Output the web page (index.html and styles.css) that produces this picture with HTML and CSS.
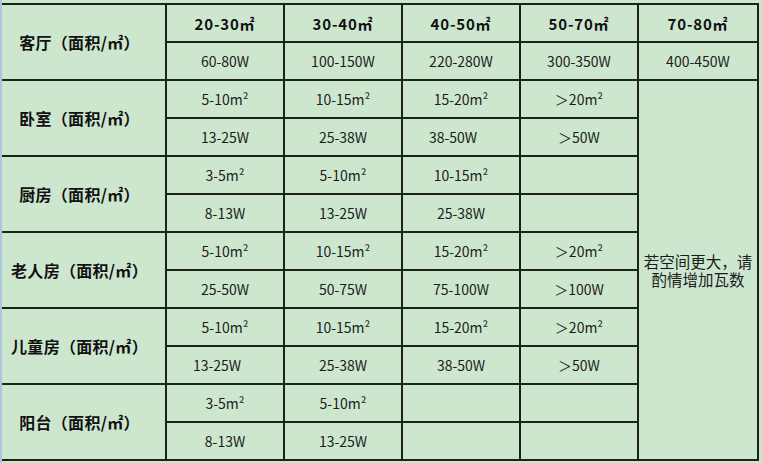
FILE: index.html
```html
<!DOCTYPE html>
<html lang="zh-CN">
<head>
<meta charset="utf-8">
<title>房间面积与瓦数</title>
<link rel="stylesheet" href="styles.css">
</head>
<body>
<div class="page">
  <div class="grid">
    <div class="c lab r1">客厅（面积/㎡）</div>
    <div class="c hd">20-30㎡</div>
    <div class="c hd">30-40㎡</div>
    <div class="c hd">40-50㎡</div>
    <div class="c hd">50-70㎡</div>
    <div class="c hd">70-80㎡</div>
    <div class="c">60-80W</div>
    <div class="c">100-150W</div>
    <div class="c">220-280W</div>
    <div class="c">300-350W</div>
    <div class="c">400-450W</div>

    <div class="c lab r2">卧室（面积/㎡）</div>
    <div class="c">5-10m²</div>
    <div class="c">10-15m²</div>
    <div class="c">15-20m²</div>
    <div class="c">＞20m²</div>
    <div class="c note"><span class="line">若空间更大，请</span><span class="line">酌情增加瓦数</span></div>
    <div class="c">13-25W</div>
    <div class="c">25-38W</div>
    <div class="c left">38-50W</div>
    <div class="c">＞50W</div>

    <div class="c lab">厨房（面积/㎡）</div>
    <div class="c">3-5m²</div>
    <div class="c">5-10m²</div>
    <div class="c">10-15m²</div>
    <div class="c"></div>
    <div class="c">8-13W</div>
    <div class="c">13-25W</div>
    <div class="c">25-38W</div>
    <div class="c"></div>

    <div class="c lab">老人房（面积/㎡）</div>
    <div class="c">5-10m²</div>
    <div class="c">10-15m²</div>
    <div class="c">15-20m²</div>
    <div class="c">＞20m²</div>
    <div class="c">25-50W</div>
    <div class="c">50-75W</div>
    <div class="c">75-100W</div>
    <div class="c">＞100W</div>

    <div class="c lab">儿童房（面积/㎡）</div>
    <div class="c">5-10m²</div>
    <div class="c">10-15m²</div>
    <div class="c">15-20m²</div>
    <div class="c">＞20m²</div>
    <div class="c left">13-25W</div>
    <div class="c">25-38W</div>
    <div class="c">38-50W</div>
    <div class="c">＞50W</div>

    <div class="c lab">阳台（面积/㎡）</div>
    <div class="c">3-5m²</div>
    <div class="c">5-10m²</div>
    <div class="c"></div>
    <div class="c"></div>
    <div class="c">8-13W</div>
    <div class="c">13-25W</div>
    <div class="c"></div>
    <div class="c"></div>
  </div>
</div>
</body>
</html>
```
FILE: styles.css
```css
html, body {
  margin: 0;
  padding: 0;
  background: #cde7cf;
}

body {
  width: 762px;
  height: 463px;
  overflow: hidden;
  font-family: "Noto Sans CJK SC", "DejaVu Sans", sans-serif;
  color: #1c1c1c;
}

.page {
  height: 463px;
  box-sizing: border-box;
  padding-top: 3px;
  border-left: 2px solid #aec6dc;
}

.grid {
  display: grid;
  grid-template-columns: 163px 116px 116px 116px 116px 118px;
  grid-template-rows: repeat(12, 36px);
  gap: 2px;
  padding: 2px 2px 2px 0;
  background: #1a221a;
  width: fit-content;
}

.c {
  background: #cde7cf;
  display: flex;
  align-items: center;
  justify-content: center;
  font-size: 14px;
  line-height: 1;
  white-space: nowrap;
}

.lab {
  grid-row: span 2;
  font-size: 16px;
  font-weight: bold;
  color: #111;
  padding-right: 8px;
  letter-spacing: 0.3px;
}

.hd {
  font-size: 15px;
  font-weight: bold;
  color: #111;
  letter-spacing: 0.8px;
}

.note {
  grid-column: 6;
  grid-row: 3 / span 10;
  flex-direction: column;
  font-size: 15.5px;
  gap: 1px;
  text-align: center;
}

.line {
  display: block;
  line-height: 17px;
}

.left {
  padding-right: 16px;
}
```
